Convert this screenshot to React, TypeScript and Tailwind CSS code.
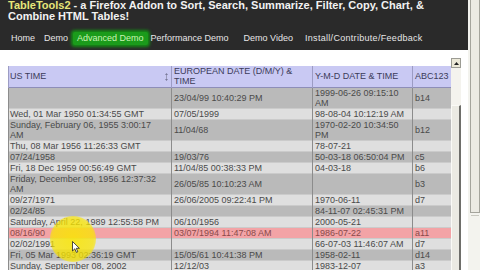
import React from "react";

type Row = {
  us: string;
  eu: string;
  ymd: string;
  abc: string;
  tone: "dark" | "light" | "pink";
};

const ROWS: Row[] = [
  { us: "", eu: "23/04/99 10:40:29 PM", ymd: "1999-06-26 09:15:10 AM", abc: "b14", tone: "dark" },
  { us: "Wed, 01 Mar 1950 01:34:55 GMT", eu: "07/05/1999", ymd: "98-08-04 10:12:19 AM", abc: "", tone: "light" },
  { us: "Sunday, February 06, 1955 3:00:17 AM", eu: "11/04/68", ymd: "1970-02-20 10:34:50 PM", abc: "b12", tone: "dark" },
  { us: "Thu, 08 Mar 1956 11:26:33 GMT", eu: "", ymd: "78-07-21", abc: "", tone: "light" },
  { us: "07/24/1958", eu: "19/03/76", ymd: "50-03-18 06:50:04 PM", abc: "c5", tone: "dark" },
  { us: "Fri, 18 Dec 1959 00:56:49 GMT", eu: "11/04/85 00:38:33 PM", ymd: "04-03-18", abc: "b6", tone: "light" },
  { us: "Friday, December 09, 1956 12:37:32 AM", eu: "26/05/85 10:10:23 AM", ymd: "", abc: "b3", tone: "dark" },
  { us: "09/27/1971", eu: "26/06/2005 09:22:41 PM", ymd: "1970-06-11", abc: "d7", tone: "light" },
  { us: "02/24/85", eu: "", ymd: "84-11-07 02:45:31 PM", abc: "", tone: "dark" },
  { us: "Saturday, April 22, 1989 12:55:58 PM", eu: "06/10/1956", ymd: "2000-05-21", abc: "", tone: "light" },
  { us: "08/16/90", eu: "03/07/1994 11:47:08 AM", ymd: "1986-07-22", abc: "a11", tone: "pink" },
  { us: "02/02/1991", eu: "", ymd: "66-07-03 11:46:07 AM", abc: "d7", tone: "light" },
  { us: "Fri, 05 Mar 1993 02:36:19 GMT", eu: "15/05/61 10:41:38 PM", ymd: "1958-02-11", abc: "d14", tone: "dark" },
  { us: "Sunday, September 08, 2002", eu: "12/12/03", ymd: "1983-12-07", abc: "a3", tone: "light" },
];

const TONES: Record<Row["tone"], string> = {
  dark: "bg-[#bababa] text-[#4a4a4a]",
  light: "bg-[#dfdfdf] text-[#4a4a4a]",
  pink: "bg-[#f3a3a6] text-[#8a4a4a]",
};

export default function App() {
  return (
    <div className="relative w-[480px] h-[270px] overflow-hidden flex bg-white font-['Liberation_Sans',Arial,sans-serif]">
      <div className="w-[468px] flex flex-col">
        {/* Site header */}
        <header className="h-[50px] shrink-0 bg-[#2a2a2a] pl-[8px]">
          <h1 className="text-[11px] leading-[11px] font-bold text-[#f2f2f2]">
            <span className="text-[#e6e67a]">TableTools2</span> - a Firefox Addon to Sort, Search, Summarize, Filter, Copy, Chart, &amp;
            <br />
            Combine HTML Tables!
          </h1>
          <nav className="mt-[10px] flex items-center text-[9px] leading-[13px] text-[#e6e6e6]">
            <span className="ml-[3px]">Home</span>
            <span className="ml-[9px]">Demo</span>
            <span className="ml-[5px] px-[4px] rounded-[2px] bg-[#1b9b1b] text-[#c9f5b4] shadow-[0_0_3px_2px_#168a16]">
              Advanced Demo
            </span>
            <span className="ml-[3px]">Performance Demo</span>
            <span className="ml-[15px]">Demo Video</span>
            <span className="ml-[12px] tracking-[0.3px]">Install/Contribute/Feedback</span>
          </nav>
        </header>

        {/* Scrollable table box */}
        <div className="mt-[8px] flex pl-[8px] flex-1 min-h-0">
          <div className="w-[443px] pt-[8px]">
            <table className="table-fixed border-collapse w-[443px] text-[9px] leading-[10px]">
              <colgroup>
                <col className="w-[163px]" />
                <col className="w-[141px]" />
                <col className="w-[100px]" />
                <col className="w-[39px]" />
              </colgroup>
              <thead>
                <tr className="bg-[#c9c9f3] text-[#3c3c5a] h-[21px] border-b border-[#8e8eb8]">
                  <th className="relative font-normal text-left align-middle pl-[1px] border-l border-r border-[#9c9cc4]">
                    US TIME
                    <svg className="absolute right-[3px] top-[7px]" width="3" height="8" viewBox="0 0 3 8">
                      <path d="M1.5 0 L3 2 L0 2 Z M1.5 8 L3 6 L0 6 Z" fill="#7a7a9a" />
                      <rect x="1" y="2" width="1" height="4" fill="#9a9ab8" />
                    </svg>
                  </th>
                  <th className="font-normal text-left align-middle pl-[2px] border-r border-[#9c9cc4]">
                    EUROPEAN DATE (D/M/Y) &amp; TIME
                  </th>
                  <th className="font-normal text-left align-middle pl-[2px] border-r border-[#9c9cc4]">
                    Y-M-D DATE &amp; TIME
                  </th>
                  <th className="font-normal text-left align-middle pl-[2px] border-r border-[#9c9cc4]">ABC123</th>
                </tr>
              </thead>
              <tbody>
                {ROWS.map((r, i) => (
                  <tr key={i} className={`${TONES[r.tone]} border-b border-[#cbcbcb]`}>
                    <td className="align-middle pl-[1px] pr-[6px] border-l border-r border-[#8c8c8c]">{r.us}</td>
                    <td className="align-middle pl-[2px] border-r border-[#8c8c8c]">{r.eu}</td>
                    <td className="align-middle pl-[2px] border-r border-[#8c8c8c]">{r.ymd}</td>
                    <td className="align-middle pl-[2px] border-r border-[#8c8c8c]">{r.abc}</td>
                  </tr>
                ))}
              </tbody>
            </table>
          </div>

          {/* Inner scrollbar */}
          <div className="w-[10px] flex flex-col">
            <div className="h-[10px] bg-[#ece9d8] border border-[#9c9c94] flex items-center justify-center">
              <svg width="5" height="3" viewBox="0 0 5 3">
                <path d="M2.5 0 L5 3 L0 3 Z" fill="#222" />
              </svg>
            </div>
            <div className="h-[37px] bg-[#f4f3ee]" />
            <div className="flex-1 bg-[#ebeae3] border-t border-l border-t-[#fafaf6] border-l-[#fafaf6] border-r-[2px] border-r-[#6e6e6a]" />
          </div>
        </div>
      </div>

      {/* Page scrollbar */}
      <div className="w-[12px] h-[270px] bg-[#f3f3ee] flex flex-col">
        <div className="ml-[2px] w-[10px] h-[213px] bg-[#ebeae3] border-l border-r border-b border-[#a4a49c]" />
        <div className="ml-[3px] mt-[2px] w-[8px] h-[2px] border-t border-[#c8c8c0]" />
      </div>

      {/* Mouse highlight overlay */}
      <div className="absolute left-[50px] top-[216px] w-[46px] h-[46px] rounded-full bg-[radial-gradient(circle,rgba(250,230,0,0.85)_0%,rgba(250,230,0,0.75)_62%,rgba(250,230,0,0)_100%)] pointer-events-none" />
      <svg className="absolute left-[72px] top-[241px] pointer-events-none" width="8" height="12" viewBox="0 0 8 12">
        <path d="M0.5 0.5 L0.5 10 L2.8 7.8 L4.4 11.4 L5.8 10.8 L4.3 7.3 L7.4 7.3 Z" fill="#ffffff" stroke="#222" strokeWidth="0.8" />
      </svg>
    </div>
  );
}
